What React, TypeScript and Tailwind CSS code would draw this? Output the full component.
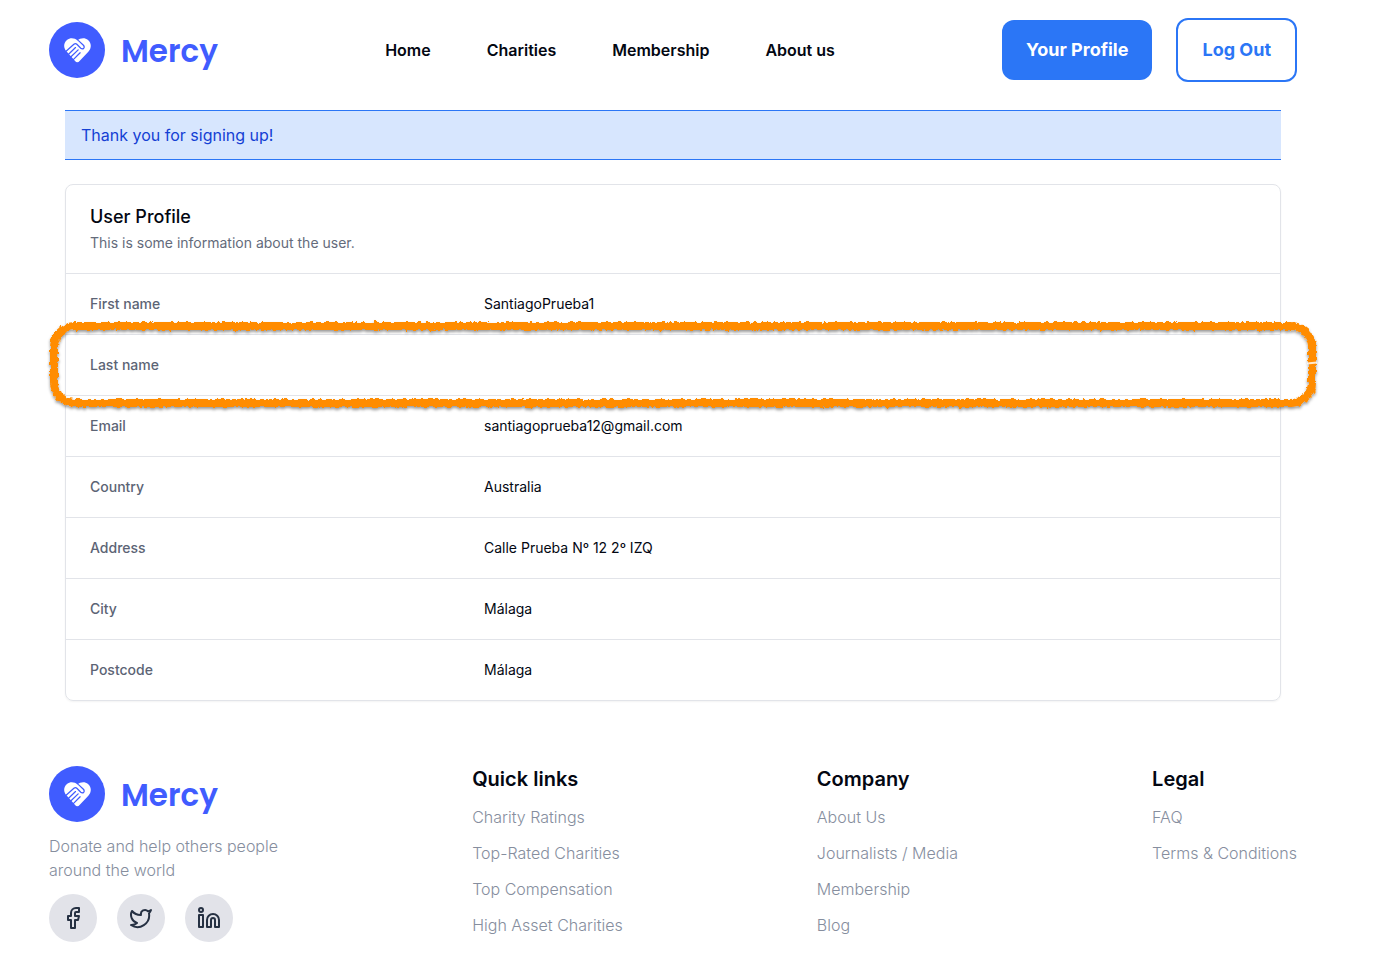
import React from "react";
import { Facebook, Linkedin, Twitter } from "lucide-react";

const navLinks = ["Home", "Charities", "Membership", "About us"];

const profile = [
  { label: "First name", value: "SantiagoPrueba1" },
  { label: "Last name", value: "", marked: true },
  { label: "Email", value: "santiagoprueba12@gmail.com" },
  { label: "Country", value: "Australia" },
  { label: "Address", value: "Calle Prueba Nº 12 2º IZQ" },
  { label: "City", value: "Málaga" },
  { label: "Postcode", value: "Málaga" },
];

const footerColumns = [
  {
    title: "Quick links",
    links: ["Charity Ratings", "Top-Rated Charities", "Top Compensation", "High Asset Charities"],
  },
  { title: "Company", links: ["About Us", "Journalists / Media", "Membership", "Blog"] },
  { title: "Legal", links: ["FAQ", "Terms & Conditions"] },
];

const socials = [
  { name: "Facebook", Icon: Facebook },
  { name: "Twitter", Icon: Twitter },
  { name: "LinkedIn", Icon: Linkedin },
];

function HeartHands({ className }: { className?: string }) {
  return (
    <svg viewBox="0 0 82 76" className={className} fill="none" aria-hidden="true">
      <path
        d="M41 8C33 0 19-2 9 6C-2 15-2 30 7 40L10 43L33 69Q40 79 48 69L74 42C84 31 84 15 73 6C63-2 49 0 41 8Z"
        fill="currentColor"
      />
      <g stroke="#405cff" strokeWidth="3.8" strokeLinecap="round" strokeLinejoin="round">
        <path d="M2 44L30 19Q35 15 39 19L51 31Q56 35 60 31Q63 27 59 22L44 8" />
        <path d="M10 53L35 29" />
        <path d="M18 60L43 36" />
        <path d="M26 68L49 45" />
      </g>
    </svg>
  );
}

function Logo() {
  return (
    <a href="#" className="flex h-[58px] w-fit items-center gap-4 text-[#405cff]">
      <span className="flex size-14 items-center justify-center rounded-full bg-[#405cff] text-white">
        <HeartHands className="h-[25px] w-[27px]" />
      </span>
      <span className="pt-0.5 font-['Poppins','Inter',sans-serif] text-[31px] leading-10 font-semibold">Mercy</span>
    </a>
  );
}

/* Hand-drawn marker outline around a row */
function MarkerOutline() {
  return (
    <div className="pointer-events-none absolute -top-[9px] -right-8 -bottom-2 -left-3">
      <svg className="size-full overflow-visible" aria-hidden="true">
        <defs>
          <filter id="marker" x="-5%" y="-30%" width="110%" height="160%">
            <feTurbulence type="fractalNoise" baseFrequency="0.25" numOctaves="2" seed="4" result="noise" />
            <feDisplacementMap in="SourceGraphic" in2="noise" scale="5" xChannelSelector="R" yChannelSelector="G" result="rough" />
            <feDropShadow in="rough" dx="0" dy="2" stdDeviation="1.5" floodColor="#000" floodOpacity="0.4" />
          </filter>
        </defs>
        <rect width="100%" height="100%" rx="21" fill="none" stroke="#ff8c00" strokeWidth="8" filter="url(#marker)" />
        <svg x="100%" y="50%" overflow="visible">
          <path d="M-5-1 L5-2" stroke="#fff" strokeWidth="2" opacity="0.8" />
        </svg>
      </svg>
    </div>
  );
}

export default function App() {
  return (
    <div className="min-h-screen bg-white pr-[30px] font-['Inter',sans-serif] text-[#030712]">
      <div className="mx-auto max-w-7xl">
        <header className="flex items-center justify-between px-4 py-[18px]">
          <Logo />
          <nav className="flex gap-14 font-semibold">
            {navLinks.map((link) => (
              <a key={link} href="#">
                {link}
              </a>
            ))}
          </nav>
          <div className="flex items-center gap-6 text-lg font-bold">
            <button className="rounded-xl bg-[#2b76f6] px-6 py-4 text-white">Your Profile</button>
            <button className="rounded-xl border-2 border-[#2b76f6] px-6 py-4 text-[#2b76f6]">Log Out</button>
          </div>
        </header>

        <main className="px-8 pt-[10px]">
          <p role="alert" className="border-y border-[#2b76f6] bg-[#d7e6fe] px-4 py-3 text-[#1440d4]">
            Thank you for signing up!
          </p>

          <section className="mt-6 rounded-lg border border-[#e2e4e9] shadow-xs">
            <div className="px-6 py-5">
              <h3 className="text-lg leading-6 font-medium">User Profile</h3>
              <p className="mt-1 text-sm text-[#646b7b]">This is some information about the user.</p>
            </div>
            <dl>
              {profile.map((row) => (
                <div
                  key={row.label}
                  className="relative grid grid-cols-3 gap-4 border-t border-[#e2e4e9] px-6 py-5 text-sm"
                >
                  <dt className="font-medium text-[#5c6475]">{row.label}</dt>
                  <dd className="col-span-2">{row.value}</dd>
                  {row.marked && <MarkerOutline />}
                </div>
              ))}
            </dl>
          </section>
        </main>

        <footer className="mt-12 flex justify-between px-4 py-4">
          <div>
            <Logo />
            <p className="mt-[11px] font-light text-[#868e9e]">
              Donate and help others people
              <br />
              around the world
            </p>
            <div className="mt-3 flex gap-5">
              {socials.map(({ name, Icon }) => (
                <a
                  key={name}
                  href="#"
                  aria-label={name}
                  className="flex size-12 items-center justify-center rounded-full bg-[#e2e3e9] text-[#263143]"
                >
                  <Icon className="size-6" />
                </a>
              ))}
            </div>
          </div>
          {footerColumns.map((column) => (
            <div key={column.title}>
              <h4 className="text-xl font-semibold">{column.title}</h4>
              <ul className="mt-3 flex flex-col gap-3 font-light text-[#868e9e]">
                {column.links.map((link) => (
                  <li key={link}>
                    <a href="#">{link}</a>
                  </li>
                ))}
              </ul>
            </div>
          ))}
        </footer>
      </div>
    </div>
  );
}
